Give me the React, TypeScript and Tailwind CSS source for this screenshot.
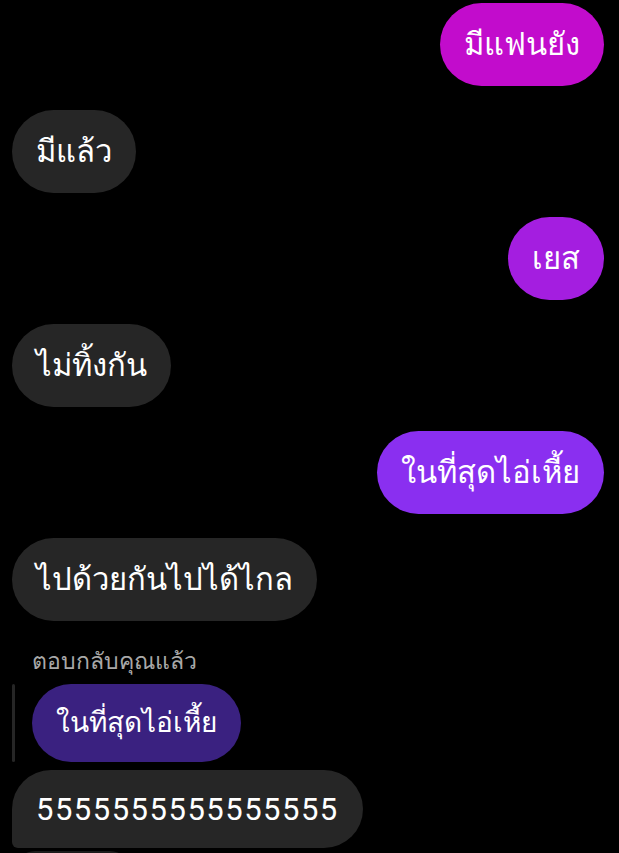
const messages: { id: number; text: string; mine: boolean; bg: string }[] = [
  { id: 1, text: 'มีแฟนยัง', mine: true, bg: 'bg-[#c20ccc]' },
  { id: 2, text: 'มีแล้ว', mine: false, bg: 'bg-[#262626]' },
  { id: 3, text: 'เยส', mine: true, bg: 'bg-[#a41ee0]' },
  { id: 4, text: 'ไม่ทิ้งกัน', mine: false, bg: 'bg-[#262626]' },
  { id: 5, text: 'ในที่สุดไอ่เหี้ย', mine: true, bg: 'bg-[#8a2ff0]' },
  { id: 6, text: 'ไปด้วยกันไปได้ไกล', mine: false, bg: 'bg-[#262626]' },
];

export default function App() {
  return (
    <div className="w-[619px] h-[853px] overflow-hidden bg-black text-white font-['Liberation_Sans',sans-serif]">
      <div className="flex flex-col gap-6 pl-3 pr-[15px] pt-[3px]">
        {messages.map((m) => (
          <div key={m.id} className={m.mine ? 'flex justify-end' : 'flex justify-start'}>
            <div
              className={`${m.bg} h-[83px] rounded-full px-6 flex items-center text-[31px] leading-none`}
            >
              {m.text}
            </div>
          </div>
        ))}
      </div>

      {/* reply block */}
      <div className="px-3 mt-[27px]">
        <div className="pl-5 text-[23px] leading-[26px] text-[#a8a8a8]">ตอบกลับคุณแล้ว</div>
        <div className="flex gap-[17px] mt-[10px]">
          <div className="w-[3px] h-[78px] rounded-full bg-[#262626]" />
          <div className="h-[78px] rounded-full bg-[#3a2180] px-6 flex items-center text-[28px] leading-none">
            ในที่สุดไอ่เหี้ย
          </div>
        </div>
        <div className="mt-2 flex">
          <div className="h-[78px] rounded-[39px] rounded-bl-[6px] bg-[#262626] px-6 flex items-center text-[31px] tracking-[1.5px] leading-none font-['Roboto',sans-serif]">
            5555555555555555
          </div>
        </div>
        <div className="mt-[3px] ml-[3px] w-[115px] h-[40px] rounded-t-[20px] bg-[#1c1c1c]" />
      </div>
    </div>
  );
}
